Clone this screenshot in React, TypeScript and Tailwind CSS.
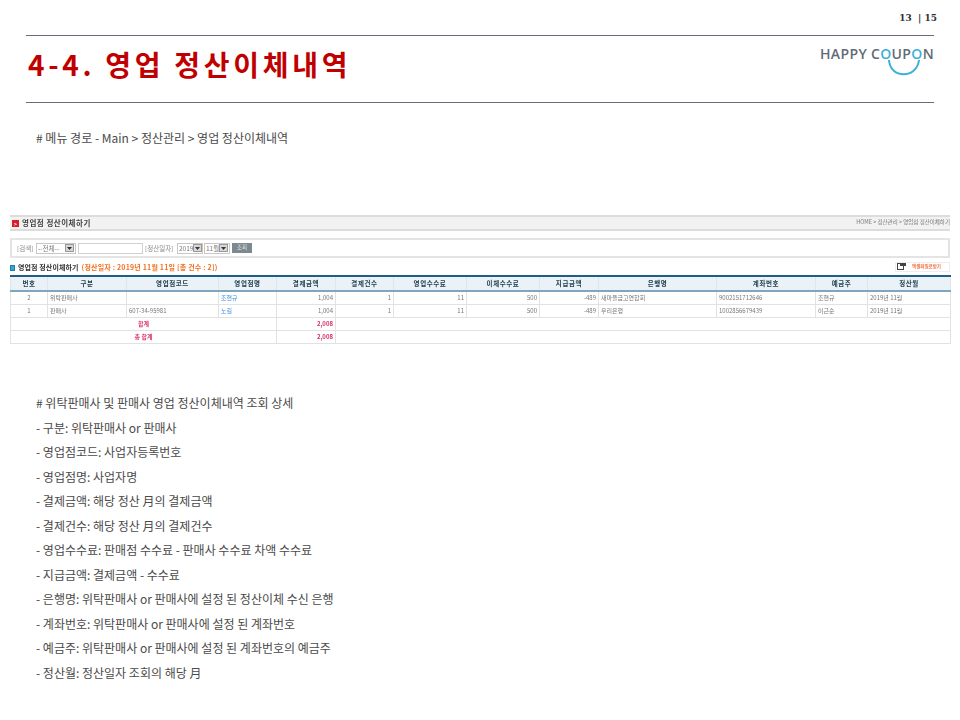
const FONT = 'font-["Noto_Sans_CJK_KR","Noto_Sans",sans-serif]'

const colWidths = ['w-[37px]', 'w-[79px]', 'w-[92px]', 'w-[58px]', 'w-[59px]', 'w-[58px]', 'w-[73px]', 'w-[73px]', 'w-[59px]', 'w-[118px]', 'w-[99px]', 'w-[52px]', 'w-[83px]']

const headers = ['번호', '구분', '영업점코드', '영업점명', '결제금액', '결제건수', '영업수수료', '이체수수료', '지급금액', '은행명', '계좌번호', '예금주', '정산월']

const rows = [
  ['2', '위탁판매사', '', '조현규', '1,004', '1', '11', '500', '-489', '새마을금고연합회', '9002151712646', '조현규', '2019년 11월'],
  ['1', '판매사', '607-34-95981', '노길', '1,004', '1', '11', '500', '-489', '우리은행', '1002856679439', '이근순', '2019년 11월'],
]

const details = [
  '# 위탁판매사 및 판매사 영업 정산이체내역 조회 상세',
  '- 구분: 위탁판매사 or 판매사',
  '- 영업점코드: 사업자등록번호',
  '- 영업점명: 사업자명',
  '- 결제금액: 해당 정산 月의 결제금액',
  '- 결제건수: 해당 정산 月의 결제건수',
  '- 영업수수료: 판매점 수수료 - 판매사 수수료 차액 수수료',
  '- 지급금액: 결제금액 - 수수료',
  '- 은행명: 위탁판매사 or 판매사에 설정 된 정산이체 수신 은행',
  '- 계좌번호: 위탁판매사 or 판매사에 설정 된 계좌번호',
  '- 예금주: 위탁판매사 or 판매사에 설정 된 계좌번호의 예금주',
  '- 정산월: 정산일자 조회의 해당 月',
]

function Logo() {
  return (
    <div className="relative w-[114px] h-[28px] mt-[11px]">
      <div className='font-["Open_Sans",sans-serif] text-[14px] leading-[14px] font-semibold tracking-[0.35px] text-[#5f6b76] whitespace-nowrap'>
        HAPPY C<span className="text-[#3bb0d8]">O</span>UP<span className="text-[#3bb0d8]">O</span>N
      </div>
      {/* smile under the two O's */}
      <svg className="absolute left-[67px] top-[13px]" width="34" height="16" viewBox="0 0 34 16" fill="none">
        <path d="M2 0 C3 19 30 19 32 0" stroke="#3bb0d8" strokeWidth="2" />
      </svg>
    </div>
  )
}

function MiniSelect({ label, width }: { label: string; width: string }) {
  return (
    <div className={`flex items-center justify-between h-[11px] border border-[#c8c8c8] bg-white pl-[1px] ${width}`}>
      <span className="text-[6.5px] leading-none text-[#777] whitespace-nowrap">{label}</span>
      <span className="flex shrink-0 items-center justify-center w-[9px] h-[8px] mr-[1px] bg-[#d8d8d8] border border-[#999]">
        <svg width="5" height="3" viewBox="0 0 5 3">
          <path d="M0 0 L2.5 3 L5 0 Z" fill="#333" />
        </svg>
      </span>
    </div>
  )
}

function LegacyScreen() {
  return (
    <div className="mx-[10px] mt-[68px] h-[128px] blur-[0.4px]">
      <div className="flex items-center justify-between h-[16px] border-y-2 border-[#dcdcdc] bg-[#f2f2f2] pl-[2px]">
        <div className="flex items-center gap-[3px]">
          <span className="flex items-center justify-center w-[7px] h-[7px] bg-[#d81f26] text-white text-[5px] leading-none font-bold">&gt;</span>
          <span className="text-[7.5px] leading-none font-bold tracking-[0.5px] text-[#444]">영업점 정산이체하기</span>
        </div>
        <span className="text-[5.5px] leading-none text-[#777] whitespace-nowrap">HOME &gt; 정산관리 &gt; 영업점 정산이체하기</span>
      </div>

      <div className="flex items-center mt-[7px] h-[20px] border-2 border-[#e4e4e4] bg-white pl-[5px] text-[6.5px] text-[#888]">
        <span className="w-[19px] leading-none">[검색]</span>
        <MiniSelect label="--전체--" width="w-[40px]" />
        <div className="w-[65px] h-[11px] ml-[2px] border border-[#d0d0d0] bg-white" />
        <span className="w-[32px] ml-[2px] leading-none whitespace-nowrap">[정산일자]</span>
        <MiniSelect label="2019" width="w-[26px]" />
        <div className="w-[1px]" />
        <MiniSelect label="11월" width="w-[26px]" />
        <span className="flex items-center justify-center w-[20px] h-[10px] ml-[2px] bg-[#7c8a90] text-[5.5px] leading-none text-[#e8e8e8]">조회</span>
      </div>

      <div className="flex items-center justify-between h-[17px]">
        <div className="flex items-center gap-[3px] pt-[2px]">
          <span className="w-[5px] h-[6px] border border-[#1f7fa8] bg-[#35a7d0]" />
          <span className="text-[7px] leading-none font-bold tracking-[0.1px] text-[#333]">영업점 정산이체하기</span>
          <span className="text-[7px] leading-none font-bold tracking-[0.2px] text-[#f07020]">(정산일자 : 2019년 11월 11일 [총 건수 : 2])</span>
        </div>
        <div className="flex items-center gap-[6px] w-[55px] h-[10px] border border-[#eeeeee] pl-[1px]">
          <svg width="9" height="7" viewBox="0 0 9 7">
            <rect x="0.5" y="0.5" width="6" height="6" fill="#fff" stroke="#444" />
            <rect x="3" y="0" width="6" height="3" fill="#444" />
          </svg>
          <span className="text-[4.5px] leading-none font-bold text-[#f07040] whitespace-nowrap">엑셀파일로받기</span>
        </div>
      </div>

      <table className="table-fixed w-[940px] border-collapse text-[6px] text-[#777]">
        <colgroup>
          {colWidths.map((w, i) => (
            <col key={i} className={w} />
          ))}
        </colgroup>
        <thead>
          <tr className="h-[15px] border-t-2 border-b-2 border-t-[#1f5f85] border-b-[#7fa6bd] bg-[#eaf2f8]">
            {headers.map((h) => (
              <th key={h} className="border-x border-[#dfe6ea] p-0 text-[6.5px] leading-none font-bold tracking-[0.6px] text-[#24404f]">
                {h}
              </th>
            ))}
          </tr>
        </thead>
        <tbody>
          {rows.map((r) => (
            <tr key={r[0]} className="h-[13px] border-b border-[#e2e2e2]">
              {r.map((c, i) => (
                <td
                  key={i}
                  className={`border-x border-[#e2e2e2] p-0 px-[2px] leading-none whitespace-nowrap overflow-hidden ${
                    i === 0 ? 'text-center' : i >= 4 && i <= 8 ? 'text-right' : 'text-left'
                  } ${i === 3 ? 'text-[#3a8ee0]' : ''}`}
                >
                  {c}
                </td>
              ))}
            </tr>
          ))}
          <tr className="h-[13px] border-b border-[#e2e2e2]">
            <td colSpan={4} className="border-x border-[#e2e2e2] p-0 text-center font-bold leading-none text-[#d8306a]">합계</td>
            <td className="border-x border-[#e2e2e2] p-0 px-[2px] text-right font-bold leading-none text-[#d8306a]">2,008</td>
            <td colSpan={8} className="border-x border-[#e2e2e2] p-0" />
          </tr>
          <tr className="h-[13px] border-b border-[#e2e2e2]">
            <td colSpan={4} className="border-x border-[#e2e2e2] p-0 text-center font-bold leading-none text-[#d8306a]">총 합계</td>
            <td className="border-x border-[#e2e2e2] p-0 px-[2px] text-right font-bold leading-none text-[#d8306a]">2,008</td>
            <td colSpan={8} className="border-x border-[#e2e2e2] p-0" />
          </tr>
        </tbody>
      </table>
    </div>
  )
}

export default function App() {
  return (
    <div className={`w-[960px] h-[720px] overflow-hidden bg-white ${FONT}`}>
      <div className="flex justify-end h-[35px] pt-[11px] pr-[23px]">
        <span className='font-["DejaVu_Serif",serif] text-[9px] leading-[14px] font-bold text-[#333] whitespace-pre'>13  | 15</span>
      </div>

      <div className="flex justify-between h-[68px] mx-[26px] border-y border-[#666e78]">
        <h1 className="pt-[9px] pl-[2px] text-[28px] leading-[38px] font-bold tracking-[3.7px] text-[#c00000] whitespace-nowrap">
          4-4. 영업 정산이체내역
        </h1>
        <Logo />
      </div>

      <p className="ml-[36px] mt-[26px] text-[12px] leading-[18px] text-[#4a4a4a]">
        # 메뉴 경로 - Main &gt; 정산관리 &gt; 영업 정산이체내역
      </p>

      <LegacyScreen />

      <ul className="ml-[36px] mt-[48px] text-[12px] leading-[24.5px] text-[#4a4a4a]">
        {details.map((d) => (
          <li key={d}>{d}</li>
        ))}
      </ul>
    </div>
  )
}
